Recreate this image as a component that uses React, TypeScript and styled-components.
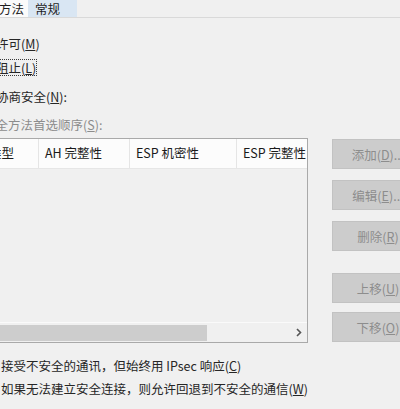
import styled, { createGlobalStyle } from "styled-components";

const GlobalStyle = createGlobalStyle`
  html, body {
    margin: 0;
    padding: 0;
    background: #f0f0f0;
  }
  body {
    font-family: "Noto Sans CJK SC", "Noto Sans", sans-serif;
    font-size: 12.5px;
    color: #262626;
  }
`;

const Screen = styled.div`
  width: 400px;
  height: 409px;
  overflow: hidden;
`;

// the dialog is cut off on the left in the screenshot, so it starts off-screen
const Dialog = styled.div`
  margin-left: -32px;
  width: 470px;
  display: flex;
  flex-direction: column;
`;

const TabStrip = styled.div`
  display: flex;
  height: 17px;
  border-bottom: 1px solid #d9d9d9;
`;

const Tab = styled.div<{ $active?: boolean; $width: number; $pad: number }>`
  width: ${(p) => p.$width}px;
  box-sizing: border-box;
  padding-left: ${(p) => p.$pad}px;
  height: 17px;
  line-height: 17px;
  white-space: nowrap;
  background: ${(p) => (p.$active ? "#fbfbfb" : "#d9e6f3")};
  color: #1e1e1e;
`;

const Row = styled.div<{ $mt: number; $indent: number; $muted?: boolean }>`
  display: flex;
  align-items: center;
  height: 17px;
  line-height: 17px;
  margin-top: ${(p) => p.$mt}px;
  padding-left: ${(p) => p.$indent}px;
  color: ${(p) => (p.$muted ? "#8c8c8c" : "#262626")};
  white-space: nowrap;
`;

const Radio = styled.span`
  width: 11px;
  height: 11px;
  border: 1px solid #333;
  border-radius: 50%;
  background: #fff;
  margin-right: 4px;
  flex: none;
`;

const Check = styled.span`
  width: 11px;
  height: 11px;
  border: 1px solid #333;
  background: #fff;
  margin-right: 5px;
  flex: none;
`;

const Label = styled.span<{ $focus?: boolean }>`
  height: 17px;
  box-sizing: border-box;
  padding: 0 1px;
  outline: ${(p) => (p.$focus ? "1px dotted #3a3a3a" : "none")};
  outline-offset: -1px;
`;

const Content = styled.div`
  display: flex;
  align-items: flex-start;
  margin-top: 5px;
  padding-left: 14px;
`;

const ListBox = styled.div`
  width: 326px;
  height: 205px;
  box-sizing: border-box;
  border: 1px solid #a9a9a9;
  background: #f0f0f0;
  display: flex;
  flex-direction: column;
  overflow: hidden;
`;

const HeaderRow = styled.div`
  display: flex;
  height: 29px;
  flex: none;
  background: #fcfcfc;
  border-bottom: 1px solid #e6e6e6;
  overflow: hidden;
`;

const HeaderCell = styled.div<{ $width: number }>`
  width: ${(p) => p.$width}px;
  flex: none;
  box-sizing: border-box;
  padding-left: 6px;
  border-right: 1px solid #e5e5e5;
  line-height: 28px;
  white-space: nowrap;
  overflow: hidden;
  color: #1a1a1a;
`;

const ListBody = styled.div`
  flex: 1;
`;

const HScroll = styled.div`
  display: flex;
  height: 19px;
  flex: none;
  border-top: 1px solid #fafafa;
  background: #f0f0f0;
`;

const ScrollArrow = styled.div`
  width: 17px;
  flex: none;
  display: flex;
  align-items: center;
  justify-content: center;
`;

const ScrollTrack = styled.div`
  flex: 1;
  display: flex;
  align-items: center;
`;

const Thumb = styled.div<{ $width: number }>`
  width: ${(p) => p.$width}px;
  height: 16px;
  background: #cdcdcd;
`;

const ButtonColumn = styled.div`
  display: flex;
  flex-direction: column;
  margin-left: 24px;
  margin-top: 1px;
`;

const Button = styled.div<{ $mt: number }>`
  width: 92px;
  height: 30px;
  box-sizing: border-box;
  margin-top: ${(p) => p.$mt}px;
  background: #cccccc;
  border: 1px solid #c2c2c2;
  color: #8d8d8d;
  display: flex;
  align-items: center;
  justify-content: center;
  white-space: nowrap;
`;

const Chevron = ({ left }: { left?: boolean }) => (
  <svg width="7" height="9" viewBox="0 0 7 9">
    <polyline
      points={left ? "5,1 1.5,4.5 5,8" : "2,1 5.5,4.5 2,8"}
      fill="none"
      stroke="#555"
      strokeWidth="1.6"
    />
  </svg>
);

const columns = [
  { title: "类型", width: 56 },
  { title: "AH 完整性", width: 91 },
  { title: "ESP 机密性", width: 107 },
  { title: "ESP 完整性", width: 100 },
];

const buttons = [
  { text: "添加", key: "D", tail: "...", mt: 0 },
  { text: "编辑", key: "E", tail: "...", mt: 11 },
  { text: "删除", key: "R", tail: "", mt: 11 },
  { text: "上移", key: "U", tail: "", mt: 22 },
  { text: "下移", key: "O", tail: "", mt: 9 },
];

export default function App() {
  return (
    <Screen>
      <GlobalStyle />
      <Dialog>
        <TabStrip>
          <Tab $active $width={60} $pad={6}>
            安全方法
          </Tab>
          <Tab $width={49} $pad={7}>
            常规
          </Tab>
        </TabStrip>

        <Row $mt={17} $indent={10}>
          <Radio />
          <Label>
            许可(<u>M</u>)
          </Label>
        </Row>
        <Row $mt={7} $indent={10}>
          <Radio />
          <Label $focus>
            阻止(<u>L</u>)
          </Label>
        </Row>
        <Row $mt={12} $indent={10}>
          <Radio />
          <Label>
            协商安全(<u>N</u>):
          </Label>
        </Row>
        <Row $mt={11} $indent={14} $muted>
          <Label>
            安全方法首选顺序(<u>S</u>):
          </Label>
        </Row>

        <Content>
          <ListBox>
            <HeaderRow>
              {columns.map((c) => (
                <HeaderCell key={c.title} $width={c.width}>
                  {c.title}
                </HeaderCell>
              ))}
            </HeaderRow>
            <ListBody />
            <HScroll>
              <ScrollArrow>
                <Chevron left />
              </ScrollArrow>
              <ScrollTrack>
                <Thumb $width={207} />
              </ScrollTrack>
              <ScrollArrow>
                <Chevron />
              </ScrollArrow>
            </HScroll>
          </ListBox>
          <ButtonColumn>
            {buttons.map((b) => (
              <Button key={b.key} $mt={b.mt}>
                {b.text}(<u>{b.key}</u>){b.tail}
              </Button>
            ))}
          </ButtonColumn>
        </Content>

        <Row $mt={14} $indent={14}>
          <Check />
          <Label>
            接受不安全的通讯，但始终用 IPsec 响应(<u>C</u>)
          </Label>
        </Row>
        <Row $mt={6} $indent={14}>
          <Check />
          <Label>
            如果无法建立安全连接，则允许回退到不安全的通信(<u>W</u>)
          </Label>
        </Row>
      </Dialog>
    </Screen>
  );
}
